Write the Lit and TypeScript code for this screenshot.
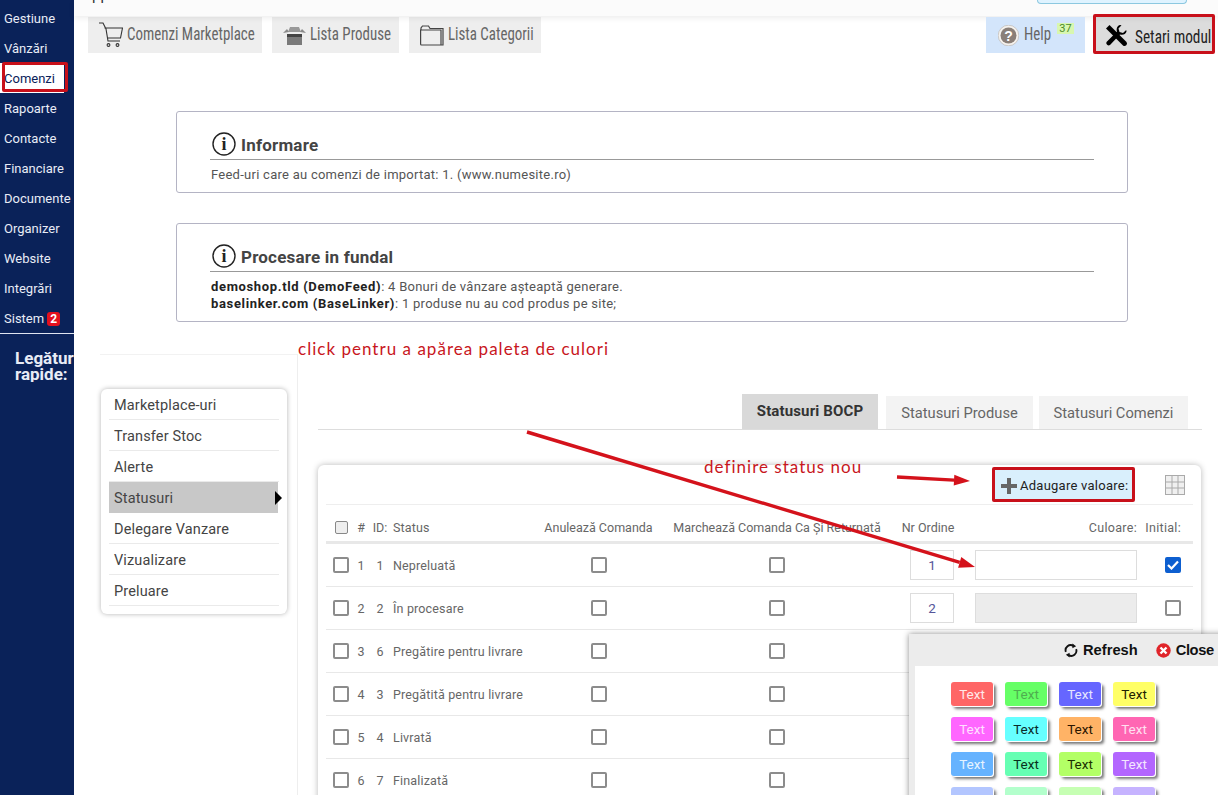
import { LitElement, html, css, svg } from 'lit';
import { customElement } from 'lit/decorators.js';

const NAV = ['Gestiune', 'Vânzări', 'Comenzi', 'Rapoarte', 'Contacte', 'Financiare', 'Documente', 'Organizer', 'Website', 'Integrări', 'Sistem'];
const MENU = ['Marketplace-uri', 'Transfer Stoc', 'Alerte', 'Statusuri', 'Delegare Vanzare', 'Vizualizare', 'Preluare'];
const ROWS = [
  { n: 1, id: 1, name: 'Nepreluată', color: '#ffffff', initial: true },
  { n: 2, id: 2, name: 'În procesare', color: '#ececec', initial: false },
  { n: 3, id: 6, name: 'Pregătire pentru livrare', color: '#ececec', initial: false },
  { n: 4, id: 3, name: 'Pregătită pentru livrare', color: '#ececec', initial: false },
  { n: 5, id: 4, name: 'Livrată', color: '#ececec', initial: false },
  { n: 6, id: 7, name: 'Finalizată', color: '#ececec', initial: false },
];
const SWATCHES = [
  ['#ff6666', '#ffe9e9'], ['#66ff66', '#4fae4f'], ['#6666ff', '#e6e6ff'], ['#ffff66', '#222200'],
  ['#ff66ff', '#ffe0ff'], ['#66ffff', '#0a2a2a'], ['#ffb366', '#2a1500'], ['#ff66b3', '#ffe0f0'],
  ['#66b3ff', '#e6f3ff'], ['#66ffb3', '#08301c'], ['#b3ff66', '#1c3000'], ['#b366ff', '#f3e6ff'],
  ['#b3c6ff', '#111'], ['#b3ffcc', '#111'], ['#c6ffb3', '#111'], ['#c6b3ff', '#111'],
];

const infoIcon = html`<svg class="info" width="24" height="24" viewBox="0 0 24 24">
  <circle cx="12" cy="12" r="11" fill="none" stroke="#222" stroke-width="1.4"></circle>
  <text x="12" y="18" text-anchor="middle" font-family="Liberation Serif, serif" font-weight="700" font-size="18" fill="#222">i</text>
</svg>`;

const arrow = (x1: number, y1: number, x2: number, y2: number, w: number, len: number, half: number) => {
  const a = Math.atan2(y2 - y1, x2 - x1);
  const bx = x2 - Math.cos(a) * len;
  const by = y2 - Math.sin(a) * len;
  const nx = -Math.sin(a) * half;
  const ny = Math.cos(a) * half;
  return svg`<line x1=${x1} y1=${y1} x2=${bx} y2=${by} stroke="#d4121b" stroke-width=${w}></line>
    <polygon fill="#d4121b" points="${x2},${y2} ${bx + nx},${by + ny} ${bx - nx},${by - ny}"></polygon>`;
};

@customElement('app-root')
export class AppRoot extends LitElement {
  static styles = css`
    :host {
      display: grid;
      grid-template-columns: 74px 1fr;
      position: relative;
      width: 1218px;
      height: 795px;
      overflow: hidden;
      background: #fff;
      font-family: Roboto, sans-serif;
      color: #555;
    }

    /* sidebar */
    .side {
      background: #0a2259;
      color: #e8ecf6;
      padding-top: 3px;
      font-size: 13px;
    }
    .nav-item {
      height: 30px;
      line-height: 32px;
      padding-left: 4px;
      white-space: nowrap;
    }
    .nav-item.active {
      background: #fff;
      color: #0a2259;
      margin-right: 10px;
    }
    .badge {
      display: inline-block;
      background: #e3101e;
      color: #fff;
      font-weight: 700;
      font-size: 12px;
      line-height: 14px;
      width: 13px;
      text-align: center;
      border-radius: 3px;
      margin-left: 3px;
    }
    .quick {
      border-top: 1px solid #dfe4f0;
      padding: 16px 0 0 15px;
      font-weight: 700;
      font-size: 17px;
      line-height: 16px;
      white-space: nowrap;
      overflow: hidden;
    }

    /* top */
    .top {
      height: 16px;
      background: #fbfbfb;
      box-shadow: 0 2px 6px rgba(0, 0, 0, 0.08);
      display: flex;
      justify-content: space-between;
      padding: 0 31px 0 18px;
      position: relative;
      overflow: hidden;
    }
    .top-stub {
      font-size: 15px;
      color: #333;
      line-height: 6px;
      margin-top: -8px;
    }
    .top-btn {
      width: 148px;
      height: 3px;
      background: #dff3ff;
      border: 1px solid #8cc8e0;
      border-top: 0;
      border-radius: 0 0 4px 4px;
    }
    .toolbar {
      display: flex;
      padding: 1px 6px 0 14px;
      gap: 10px;
      font-family: 'Liberation Sans Narrow', 'Roboto Condensed', Roboto, sans-serif;
      font-size: 18px;
      height: 36px;
    }
    .tool {
      display: flex;
      align-items: center;
      gap: 4px;
      background: #eee;
      color: #666;
      padding-left: 11px;
      white-space: nowrap;
      box-sizing: border-box;
    }
    .tool svg { flex: none; }
    /* the narrow family is still wider than the original, so the labels are squeezed */
    .lbl {
      flex: none;
      width: 0;
      transform: scaleX(0.83);
      transform-origin: left center;
      margin-top: -3px;
    }
    .w-orders { flex: 0 0 174px; }
    .w-products { flex: 0 0 127px; }
    .w-cats { flex: 0 0 132px; }
    .tool.help {
      flex: 0 0 99px;
      background: #d3e5fb;
      margin-left: auto;
      position: relative;
      padding-left: 12px;
      gap: 5px;
    }
    .sup {
      position: absolute;
      left: 71px;
      top: 6px;
      width: 17px;
      text-align: center;
      background: #d8f7b0;
      color: #4a8a2a;
      font: 11px Roboto, sans-serif;
      line-height: 11px;
    }
    .tool.setari {
      flex: 0 0 116px;
      background: #dcdcdc;
      color: #222;
      margin-left: 1px;
      padding-left: 9px;
      gap: 7px;
    }
    .setari .lbl { margin-top: 2px; transform: scaleX(0.85); }

    /* info boxes */
    .box {
      width: 952px;
      margin-left: 102px;
      box-sizing: border-box;
      border: 1px solid #b4b4c4;
      border-radius: 3px;
      padding: 20px 33px 0;
      color: #555;
      font-size: 13px;
      line-height: 17px;
      letter-spacing: 0.26px;
    }
    .box.first { margin-top: 58px; height: 82px; }
    .box.second { margin-top: 30px; height: 99px; }
    .box-title {
      display: flex;
      align-items: center;
      gap: 5px;
      border-bottom: 1px solid #999;
      padding: 0 0 3px 2px;
      height: 24px;
      margin-bottom: 6px;
      font-size: 17px;
      font-weight: 700;
      color: #444;
      letter-spacing: 0.2px;
    }
    .box-title span { padding-top: 2px; }
    .box-body { padding-left: 1px; }
    .box b { color: #222; letter-spacing: 0.65px; }

    /* settings area */
    .settings {
      display: grid;
      grid-template-columns: 198px 1fr;
      margin: 32px 0 0 26px;
    }
    .left {
      border-top: 1px solid #f2f2f2;
      border-right: 1px solid #eee;
      height: 460px;
      box-sizing: border-box;
      padding: 34px 0 0 1px;
    }
    .menu {
      position: relative;
      width: 186px;
      height: 225px;
      box-sizing: border-box;
      border-radius: 6px;
      box-shadow: 0 0 5px rgba(0, 0, 0, 0.3);
      padding: 0 8px;
      font-size: 14.5px;
      letter-spacing: 0.14px;
      color: #444;
    }
    .menu-item {
      height: 31px;
      line-height: 33px;
      padding-left: 5px;
      border-bottom: 1px solid #eaeaea;
      box-sizing: border-box;
    }
    .menu-item.active {
      background: #c8c8c8;
      border-bottom: 0;
      margin-right: 1px;
      position: relative;
    }
    .menu-item.active::after {
      content: '';
      position: absolute;
      right: -4px;
      top: 9px;
      border-left: 7px solid #000;
      border-top: 7px solid transparent;
      border-bottom: 7px solid transparent;
    }
    .right { padding: 0 0 0 20px; }
    .tabs {
      display: flex;
      justify-content: flex-end;
      align-items: flex-end;
      height: 76px;
      width: 884px;
      box-sizing: border-box;
      border-bottom: 1px solid #ddd;
      padding-right: 14px;
      font-size: 14.7px;
    }
    .tab {
      background: #f3f3f3;
      height: 33px;
      line-height: 35px;
      color: #666;
      margin-left: 6px;
      text-align: center;
      white-space: nowrap;
      width: 149px;
    }
    .tab.produse { width: 147px; }
    .tab.active {
      background: #d9d9d9;
      height: 35px;
      line-height: 35px;
      width: 136px;
      color: #333;
      font-weight: 700;
      font-size: 15px;
      letter-spacing: 0.14px;
      margin-right: 2px;
    }
    .grid-card {
      margin-top: 35px;
      width: 883px;
      box-sizing: border-box;
      padding: 0 8px;
      border-radius: 6px 6px 0 0;
      box-shadow: 0 0 6px rgba(0, 0, 0, 0.28);
      height: 400px;
    }
    .card-top {
      height: 40px;
      border-bottom: 1px solid #eee;
      display: flex;
      justify-content: flex-end;
      align-items: center;
      padding-right: 8px;
      box-sizing: border-box;
      gap: 30px;
    }
    .add {
      display: flex;
      align-items: center;
      gap: 3px;
      background: #d9effc;
      color: #222;
      font-size: 13px;
      letter-spacing: 0.25px;
      width: 143px;
      height: 31px;
      box-sizing: border-box;
      padding-left: 9px;
      border-radius: 2px;
      margin-top: 2px;
    }
    .row {
      display: grid;
      grid-template-columns: 27px 16px 22px 153px 109px 248px 62px 186px 44px;
      align-items: center;
      height: 43px;
      border-bottom: 1px solid #e8e8e8;
      box-sizing: border-box;
      font-size: 12.5px;
      color: #666;
    }
    .row.head {
      height: 39px;
      border-bottom: 3px solid #e8e8e8;
      padding-top: 8px;
    }
    .name { padding-left: 2px; letter-spacing: 0.16px; white-space: nowrap; }
    .c { text-align: center; white-space: nowrap; }
    .c.order { padding-right: 8px; }
    .chk {
      display: block;
      width: 16px;
      height: 16px;
      box-sizing: border-box;
      border: 2px solid #8c8c8c;
      border-radius: 2px;
    }
    .chk.mid { margin: 0 auto; }
    .chk.first { margin-left: 7px; }
    .chk.light { border: 1px solid #888; background: #eee; width: 13px; height: 13px; margin-left: 9px; }
    .chk.end { justify-self: end; margin-right: 12px; }
    .chk.on {
      background: #0d5fd0;
      border-color: #0d5fd0;
      display: flex;
      align-items: center;
      justify-content: center;
    }
    .ord {
      width: 44px;
      height: 30px;
      box-sizing: border-box;
      margin: 0 auto;
      border: 1px solid #ddd;
      line-height: 28px;
      text-align: center;
      font-size: 13.5px;
      color: #55559a;
    }
    .swatch-input {
      width: 162px;
      height: 30px;
      box-sizing: border-box;
      margin: 0 auto;
      border: 1px solid #ddd;
    }
    .r { justify-self: end; margin-right: 12px; white-space: nowrap; letter-spacing: 0.3px; }

    /* colour popup */
    .popup {
      position: absolute;
      left: 909px;
      top: 634px;
      width: 320px;
      height: 180px;
      background: #ececec;
      box-shadow: 0 0 6px rgba(0, 0, 0, 0.45);
      padding: 0 0 0 6px;
      box-sizing: border-box;
    }
    .popup-head {
      height: 32px;
      display: flex;
      align-items: center;
      color: #111;
      font: 700 14.7px 'Liberation Sans', sans-serif;
      padding-left: 149px;
      gap: 18px;
    }
    .popup-act { display: flex; align-items: center; gap: 5px; }
    .popup-act.close { letter-spacing: -0.4px; }
    .palette {
      background: #fff;
      height: 148px;
      padding: 16px 0 0 36px;
      display: grid;
      grid-template-columns: repeat(4, 42px);
      grid-auto-rows: 24px;
      gap: 11px 12px;
    }
    .sw {
      border-radius: 3px;
      text-align: center;
      font-size: 13.5px;
      line-height: 24px;
      box-shadow: 1px 1px 0 #fff, 3px 3px 3px #777;
    }

    /* annotations */
    .shot { position: absolute; inset: 0; pointer-events: none; }
    .mark { position: absolute; border: 3px solid #c8101a; box-sizing: border-box; border-radius: 2px; }
    .note {
      position: absolute;
      font-family: Lato, sans-serif;
      color: #c8161d;
      font-size: 17px;
      letter-spacing: 1.02px;
      white-space: nowrap;
    }
  `;

  render() {
    return html`
      <aside class="side">
        ${NAV.map((n) => html`<div class="nav-item ${n === 'Comenzi' ? 'active' : ''}">${n}${n === 'Sistem' ? html`<span class="badge">2</span>` : ''}</div>`)}
        <div class="quick">Legături<br />rapide:</div>
      </aside>
      <main>
        <div class="top"><span class="top-stub">pp</span><div class="top-btn"></div></div>
        <nav class="toolbar">
          <div class="tool w-orders">
            <svg width="24" height="26" viewBox="0 0 24 26" fill="none" stroke="#333" stroke-width="1.1">
              <path d="M0 1h4l3 6 2 12h12M5.500 6h18l-2 10H8"></path>
              <circle cx="9.500" cy="23" r="1.400"></circle><circle cx="18.500" cy="23" r="1.400"></circle>
            </svg>
            <span class="lbl">Comenzi Marketplace</span>
          </div>
          <div class="tool w-products">
            <svg width="23" height="20" viewBox="0 0 23 20">
              <path d="M5 7 7 2h9l2 5z" fill="#999"></path>
              <path d="M0 8l4-4 2 3zM23 8l-4-4-2 3z" fill="#8a8a8a"></path>
              <rect x="4" y="9" width="15" height="3" fill="#444"></rect>
              <rect x="4" y="12" width="15" height="8" fill="#7a7a7a"></rect>
            </svg>
            <span class="lbl">Lista Produse</span>
          </div>
          <div class="tool w-cats">
            <svg width="24" height="21" viewBox="0 0 24 21" fill="none" stroke="#444" stroke-width="1.2">
              <path d="M21 20H1.500Q.6 20 .6 19V5h20.400v15h2V3.500H10L8.500 1H2.500L1 3v2"></path>
            </svg>
            <span class="lbl">Lista Categorii</span>
          </div>
          <div class="tool help">
            <svg width="21" height="21" viewBox="0 0 21 21">
              <circle cx="10.500" cy="10.500" r="10.300" fill="#f5f2ee" stroke="#b8b0a8" stroke-width=".6"></circle>
              <circle cx="10.500" cy="10.500" r="8" fill="#8a7f78"></circle>
              <text x="10.500" y="15.500" text-anchor="middle" font-family="Liberation Sans, sans-serif" font-weight="700" font-size="14" fill="#fff">?</text>
            </svg>
            <span class="lbl">Help</span><span class="sup">37</span>
          </div>
          <div class="tool setari">
            <svg width="23" height="23" viewBox="0 0 23 23" fill="#000">
              <path d="M1 4.500 4.500 1l17 17a2.500 2.500 0 0 1-3.500 3.500z"></path>
              <path d="M1.500 18 12 7.500c-1-3 .5-6 3-6.500l1.500.3L13.500 4.500l1 3.500 3.500 1 3.200-3 .3 1.500c-.5 2.500-3.500 4-6.500 3L5 21a2.400 2.400 0 0 1-3.500-3z"></path>
            </svg>
            <span class="lbl">Setari modul</span>
          </div>
        </nav>

        <section class="box first">
          <div class="box-title">${infoIcon}<span>Informare</span></div>
          <div class="box-body">Feed-uri care au comenzi de importat: 1. (www.numesite.ro)</div>
        </section>
        <section class="box second">
          <div class="box-title">${infoIcon}<span>Procesare in fundal</span></div>
          <div class="box-body">
            <b>demoshop.tld (DemoFeed)</b>: 4 Bonuri de vânzare așteaptă generare.<br />
            <b>baselinker.com (BaseLinker)</b>: 1 produse nu au cod produs pe site;
          </div>
        </section>

        <div class="settings">
          <div class="left">
            <div class="menu">
              ${MENU.map((m) => html`<div class="menu-item ${m === 'Statusuri' ? 'active' : ''}">${m}</div>`)}
            </div>
          </div>
          <div class="right">
            <div class="tabs">
              <div class="tab active">Statusuri BOCP</div>
              <div class="tab produse">Statusuri Produse</div>
              <div class="tab">Statusuri Comenzi</div>
            </div>
            <div class="grid-card">
              <div class="card-top">
                <div class="add">
                  <svg width="16" height="16" viewBox="0 0 16 16"><path d="M6 0h4v6h6v4h-6v6H6v-6H0V6h6z" fill="#666"></path></svg>
                  Adaugare valoare:
                </div>
                <svg width="20" height="20" viewBox="0 0 20 20" fill="#f0f0f0" stroke="#aaa" stroke-width="1">
                  <rect x=".5" y=".5" width="19" height="19"></rect>
                  <path d="M.5 7h19M.5 13h19M7 .5v19M13 .5v19"></path>
                </svg>
              </div>
              <div class="row head">
                <span class="chk first light"></span>
                <span class="c">#</span>
                <span class="c">ID:</span>
                <span class="name">Status</span>
                <span class="c">Anulează Comanda</span>
                <span class="c">Marchează Comanda Ca Și Returnată</span>
                <span class="c order">Nr Ordine</span>
                <span class="r">Culoare:</span>
                <span class="r">Initial:</span>
              </div>
              ${ROWS.map((r) => html`
                <div class="row">
                  <span class="chk first"></span>
                  <span class="c">${r.n}</span>
                  <span class="c">${r.id}</span>
                  <span class="name">${r.name}</span>
                  <span class="chk mid"></span>
                  <span class="chk mid"></span>
                  <div class="ord">${r.n}</div>
                  <div class="swatch-input" style="background:${r.color}"></div>
                  ${r.initial
                    ? html`<span class="chk end on"><svg width="12" height="10" viewBox="0 0 12 10"><path d="M1 5l3.500 3.500L11 1.500" fill="none" stroke="#fff" stroke-width="2.200"></path></svg></span>`
                    : html`<span class="chk end"></span>`}
                </div>`)}
            </div>
          </div>
        </div>
      </main>

      <div class="popup">
        <div class="popup-head">
          <span class="popup-act">
            <svg width="14" height="15" viewBox="0 0 15 15" fill="none" stroke="#111" stroke-width="2">
              <path d="M2 9a5.500 5.500 0 0 1 8-6.500M13 6a5.500 5.500 0 0 1-8 6.500"></path>
              <path d="M9 0l4 3-4 2zM6 15l-4-3 4-2z" fill="#111" stroke="none"></path>
            </svg>
            Refresh
          </span>
          <span class="popup-act close">
            <svg width="15" height="15" viewBox="0 0 15 15">
              <circle cx="7.500" cy="7.500" r="7.200" fill="#e0252a"></circle>
              <path d="M4.500 4.500l6 6M10.500 4.500l-6 6" stroke="#fff" stroke-width="2.400"></path>
            </svg>
            Close
          </span>
        </div>
        <div class="palette">
          ${SWATCHES.map(([bg, fg]) => html`<div class="sw" style="background:${bg};color:${fg}">Text</div>`)}
        </div>
      </div>

      <div class="shot">
        <div class="mark" style="left:2px;top:62px;width:66px;height:30px"></div>
        <div class="mark" style="left:1093px;top:14px;width:122px;height:40px"></div>
        <div class="mark" style="left:992px;top:467px;width:143px;height:35px"></div>
        <div class="note" style="left:298px;top:338px">click pentru a apărea paleta de culori</div>
        <div class="note" style="left:704px;top:456px">definire status nou</div>
        <svg width="1218" height="795" style="position:absolute;left:0;top:0">
          ${arrow(527, 432, 975, 567, 3.4, 16, 5.500)}
          ${arrow(897, 477, 970, 481, 3.4, 16, 5.500)}
        </svg>
      </div>
    `;
  }
}
